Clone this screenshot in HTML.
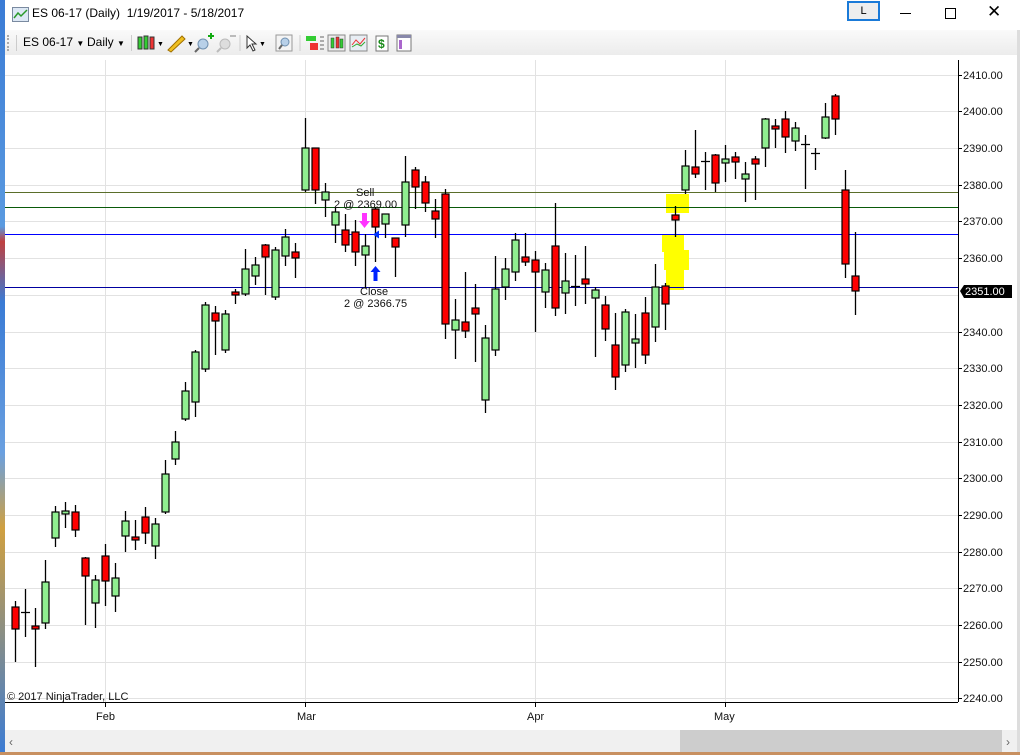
<!DOCTYPE html>
<html><head><meta charset="utf-8"><style>
body{margin:0;width:1020px;height:755px;overflow:hidden;background:#fff;font-family:"Liberation Sans",sans-serif;position:relative}
.abs{position:absolute}
</style></head><body>
<div class="abs" style="left:0;top:0;width:5px;height:755px;background:linear-gradient(#3a7bd5,#5a9ae0 30%,#c04040 32%,#3a7bd5 40%,#6aa0e0 60%,#d0a040 70%,#3a7bd5)"></div>
<div class="abs" style="left:5px;top:0;width:1015px;height:30px;background:#fff"></div>
<svg class="abs" style="left:12px;top:7px" width="17" height="15"><rect x="0.5" y="0.5" width="16" height="14" fill="#dde8f5" stroke="#7a8aa0"/><polyline points="2,11 6,6 9,9 15,3" fill="none" stroke="#2a9a2a" stroke-width="1.5"/></svg>
<div class="abs" style="left:32px;top:6px;font-size:12px;color:#000">ES 06-17 (Daily)&nbsp; 1/19/2017 - 5/18/2017</div>
<div class="abs" style="left:847px;top:1px;width:29px;height:16px;border:2px solid #1a7ad8;background:#eee;font-size:11px;text-align:center;line-height:16px">L</div>
<div class="abs" style="left:900px;top:13px;width:11px;height:1px;background:#000"></div>
<div class="abs" style="left:945px;top:8px;width:9px;height:9px;border:1px solid #000"></div>
<div class="abs" style="left:987px;top:2px;font-size:17px">✕</div>
<div class="abs" style="left:5px;top:30px;width:1012px;height:25px;background:linear-gradient(#fafafa,#ececec)"></div>
<div class="abs" style="left:7px;top:35px;width:2px;height:16px;border-left:2px dotted #aaa"></div>
<div class="abs" style="left:16px;top:35px;width:1px;height:16px;background:#ccc"></div>
<div class="abs" style="left:23px;top:35px;font-size:12px">ES 06-17 <span style="font-size:8px">▼</span></div>
<div class="abs" style="left:87px;top:35px;font-size:12px">Daily <span style="font-size:8px">▼</span></div>
<div class="abs" style="left:131px;top:35px;width:1px;height:16px;background:#ccc"></div>
<svg class="abs" style="left:136px;top:33px" width="340" height="20">
<g stroke="#333" stroke-width="1"><rect x="2" y="4" width="4" height="12" fill="#3c3"/><rect x="8" y="3" width="4" height="13" fill="#3c3"/><rect x="14" y="4" width="4" height="12" fill="#e33"/></g>
<text x="21" y="13" font-size="7">▼</text>
<path d="M32 17 L46 3 L49 6 L35 19 Z" fill="#f0c020" stroke="#a07000"/><text x="51" y="13" font-size="7">▼</text>
<circle cx="67" cy="11" r="5" fill="#b8d0e8" stroke="#7090b0"/><line x1="63" y1="15" x2="59" y2="19" stroke="#666" stroke-width="2"/><path d="M72 3h6M75 0v6" stroke="#1a1" stroke-width="2"/>
<circle cx="89" cy="11" r="5" fill="#ddd" stroke="#bbb"/><line x1="85" y1="15" x2="81" y2="19" stroke="#bbb" stroke-width="2"/><path d="M94 3h6" stroke="#bbb" stroke-width="2"/>
<line x1="104" y1="2" x2="104" y2="18" stroke="#ccc"/>
<path d="M111 3 L111 15 L114 12 L117 18 L119 17 L116 11 L120 11 Z" fill="#fff" stroke="#333"/><text x="123" y="13" font-size="7">▼</text>
<rect x="140" y="2" width="16" height="16" fill="#f4f4f4" stroke="#999"/><circle cx="149" cy="9" r="4" fill="#b8d0e8" stroke="#7090b0"/><line x1="146" y1="12" x2="143" y2="16" stroke="#666" stroke-width="2"/>
<line x1="164" y1="2" x2="164" y2="18" stroke="#ccc"/>
<rect x="170" y="3" width="10" height="5" fill="#3c3"/><rect x="174" y="10" width="8" height="7" fill="#e33"/><path d="M184 4h4M184 8h4M184 12h4M184 16h4" stroke="#666"/>
<rect x="192" y="2" width="17" height="16" fill="#eee" stroke="#888"/><rect x="195" y="5" width="3" height="10" fill="#3c3" stroke="#333" stroke-width=".5"/><rect x="200" y="4" width="3" height="11" fill="#e33" stroke="#333" stroke-width=".5"/><rect x="204" y="6" width="3" height="9" fill="#3c3" stroke="#333" stroke-width=".5"/>
<rect x="214" y="2" width="17" height="16" fill="#e8eef4" stroke="#888"/><polyline points="216,12 220,7 224,11 229,5" fill="none" stroke="#e33"/><polyline points="216,14 221,11 225,13 229,9" fill="none" stroke="#3a3"/>
<rect x="240" y="3" width="12" height="15" fill="#fff" stroke="#777"/><text x="242" y="15" font-size="12" font-weight="bold" fill="#1a8a1a">$</text>
<rect x="261" y="2" width="14" height="16" fill="#fff" stroke="#777"/><rect x="261" y="2" width="14" height="3" fill="#88a"/><rect x="263" y="7" width="3" height="9" fill="#a6c"/>
</svg>
<svg class="abs" style="left:0;top:0" width="1020" height="755">
<g stroke="#e2e2e2" stroke-width="1">
<line x1="105.5" y1="60" x2="105.5" y2="702"/><line x1="305.5" y1="60" x2="305.5" y2="702"/><line x1="535.5" y1="60" x2="535.5" y2="702"/><line x1="725.5" y1="60" x2="725.5" y2="702"/>
<line x1="5" y1="75.5" x2="958" y2="75.5"/><line x1="5" y1="111.5" x2="958" y2="111.5"/><line x1="5" y1="148.5" x2="958" y2="148.5"/><line x1="5" y1="185.5" x2="958" y2="185.5"/><line x1="5" y1="221.5" x2="958" y2="221.5"/><line x1="5" y1="258.5" x2="958" y2="258.5"/><line x1="5" y1="295.5" x2="958" y2="295.5"/><line x1="5" y1="332.5" x2="958" y2="332.5"/><line x1="5" y1="368.5" x2="958" y2="368.5"/><line x1="5" y1="405.5" x2="958" y2="405.5"/><line x1="5" y1="442.5" x2="958" y2="442.5"/><line x1="5" y1="478.5" x2="958" y2="478.5"/><line x1="5" y1="515.5" x2="958" y2="515.5"/><line x1="5" y1="552.5" x2="958" y2="552.5"/><line x1="5" y1="588.5" x2="958" y2="588.5"/><line x1="5" y1="625.5" x2="958" y2="625.5"/><line x1="5" y1="662.5" x2="958" y2="662.5"/><line x1="5" y1="698.5" x2="958" y2="698.5"/>
</g>
<g fill="#ffff00"><rect x="666" y="194" width="23" height="19"/><rect x="662" y="235" width="22" height="17"/><rect x="664" y="250" width="25" height="20"/><rect x="666" y="268" width="18" height="22"/></g>
<line x1="5" y1="192.5" x2="958" y2="192.5" stroke="#5a6e2a"/>
<line x1="5" y1="207.5" x2="958" y2="207.5" stroke="#0a5a0a"/>
<line x1="5" y1="234.5" x2="958" y2="234.5" stroke="#0000ff"/>
<line x1="5" y1="287.5" x2="958" y2="287.5" stroke="#0000a0"/>
<g stroke="#000" stroke-width="1.3">
<path d="M15.5 601V662M25.5 589V637M35.5 608V667M45.5 560V629M55.5 506V547M65.5 502V528M75.5 505V537M85.5 557V625M95.5 575V628M105.5 544V606M115.5 563V612M125.5 511V552M135.5 520V550M145.5 507V544M155.5 518V559M165.5 460V514M175.5 431V465M185.5 382V421M195.5 350V417M205.5 302V372M215.5 306V355M225.5 310V353M235.5 289V304M245.5 249V296M255.5 257V285M265.5 244V295M275.5 247V300M285.5 229V266M295.5 243V278M305.5 118V192M315.5 148V204M325.5 183V217M335.5 207V243M345.5 214V252M355.5 220V266M365.5 234V288M375.5 207V262M385.5 214V238M395.5 238V277M405.5 156V237M415.5 167V209M425.5 176V212M435.5 199V238M445.5 189V339M455.5 299V359M465.5 272V338M475.5 284V362M485.5 325V413M495.5 256V356M505.5 258V300M515.5 233V281M525.5 233V266M535.5 251V332M545.5 263V308M555.5 203V316M565.5 253V314M575.5 255V306M585.5 246V304M595.5 287V357M605.5 296V341M615.5 313V390M625.5 309V372M635.5 314V368M645.5 297V364M655.5 264V342M665.5 283V330M675.5 206V237M685.5 150V194M695.5 130V178M705.5 152V190M715.5 154V192M725.5 145V182M735.5 152V179M745.5 162V202M755.5 156V200M765.5 118V167M775.5 119V148M785.5 111V153M795.5 122V151M805.5 135V189M815.5 148V170M825.5 103V139M835.5 94V135M845.5 170V278M855.5 232V315"/>
<path d="M21 612.5h9M571 286.5h9M701 161.5h9M801 144.5h9M811 153.5h9"/>
</g>
<g stroke="#000" stroke-width="1.2">
<g fill="#ff0000"><rect x="12" y="607" width="7" height="22"/><rect x="32" y="626" width="7" height="3"/><rect x="72" y="512" width="7" height="18"/><rect x="82" y="558" width="7" height="18"/><rect x="102" y="556" width="7" height="25"/><rect x="132" y="537" width="7" height="3"/><rect x="142" y="517" width="7" height="16"/><rect x="212" y="313" width="7" height="8"/><rect x="232" y="292" width="7" height="3"/><rect x="262" y="245" width="7" height="12"/><rect x="292" y="252" width="7" height="6"/><rect x="312" y="148" width="7" height="42"/><rect x="342" y="230" width="7" height="15"/><rect x="352" y="232" width="7" height="20"/><rect x="372" y="209" width="7" height="18"/><rect x="392" y="238" width="7" height="9"/><rect x="412" y="170" width="7" height="17"/><rect x="422" y="182" width="7" height="21"/><rect x="432" y="211" width="7" height="8"/><rect x="442" y="194" width="7" height="130"/><rect x="462" y="322" width="7" height="9"/><rect x="472" y="308" width="7" height="6"/><rect x="522" y="257" width="7" height="5"/><rect x="532" y="260" width="7" height="12"/><rect x="552" y="246" width="7" height="62"/><rect x="582" y="279" width="7" height="5"/><rect x="602" y="305" width="7" height="24"/><rect x="612" y="345" width="7" height="32"/><rect x="642" y="313" width="7" height="42"/><rect x="662" y="286" width="7" height="18"/><rect x="672" y="215" width="7" height="5"/><rect x="692" y="167" width="7" height="7"/><rect x="712" y="155" width="7" height="28"/><rect x="732" y="157" width="7" height="5"/><rect x="752" y="159" width="7" height="5"/><rect x="772" y="126" width="7" height="3"/><rect x="782" y="119" width="7" height="18"/><rect x="832" y="96" width="7" height="23"/><rect x="842" y="190" width="7" height="74"/><rect x="852" y="276" width="7" height="15"/></g>
<g fill="#90ee90"><rect x="42" y="582" width="7" height="41"/><rect x="52" y="512" width="7" height="26"/><rect x="62" y="511" width="7" height="3"/><rect x="92" y="580" width="7" height="23"/><rect x="112" y="578" width="7" height="18"/><rect x="122" y="521" width="7" height="15"/><rect x="152" y="524" width="7" height="22"/><rect x="162" y="474" width="7" height="38"/><rect x="172" y="442" width="7" height="17"/><rect x="182" y="391" width="7" height="28"/><rect x="192" y="352" width="7" height="50"/><rect x="202" y="305" width="7" height="64"/><rect x="222" y="314" width="7" height="36"/><rect x="242" y="269" width="7" height="25"/><rect x="252" y="265" width="7" height="11"/><rect x="272" y="250" width="7" height="47"/><rect x="282" y="237" width="7" height="19"/><rect x="302" y="148" width="7" height="42"/><rect x="322" y="192" width="7" height="8"/><rect x="332" y="212" width="7" height="13"/><rect x="362" y="246" width="7" height="9"/><rect x="382" y="214" width="7" height="10"/><rect x="402" y="182" width="7" height="43"/><rect x="452" y="320" width="7" height="10"/><rect x="482" y="338" width="7" height="62"/><rect x="492" y="289" width="7" height="61"/><rect x="502" y="269" width="7" height="18"/><rect x="512" y="240" width="7" height="32"/><rect x="542" y="270" width="7" height="22"/><rect x="562" y="281" width="7" height="12"/><rect x="592" y="290" width="7" height="8"/><rect x="622" y="312" width="7" height="53"/><rect x="632" y="339" width="7" height="4"/><rect x="652" y="287" width="7" height="40"/><rect x="682" y="166" width="7" height="24"/><rect x="722" y="159" width="7" height="4"/><rect x="742" y="174" width="7" height="5"/><rect x="762" y="119" width="7" height="29"/><rect x="792" y="128" width="7" height="13"/><rect x="822" y="117" width="7" height="21"/></g>
</g>
<path d="M362 213h5v8h3l-5.5 7l-5.5-7h3z" fill="#ff33ff"/>
<path d="M373 234.5l6-4v8z" fill="#0033ff"/>
<path d="M375.5 266l5 6h-3v9h-4v-9h-3z" fill="#0022ff"/>
<g font-size="11" fill="#111">
<text x="356" y="196">Sell</text><text x="334" y="208">2 @ 2369.00</text>
<text x="360" y="295">Close</text><text x="344" y="307">2 @ 2366.75</text>
<text x="7" y="700">© 2017 NinjaTrader, LLC</text>
</g>
<line x1="5" y1="702.5" x2="958" y2="702.5" stroke="#000"/>
<line x1="958.5" y1="60" x2="958.5" y2="702" stroke="#000"/>
<g stroke="#000"><path d="M105.5 702v5M305.5 702v5M535.5 702v5M725.5 702v5"/>
<path d="M958 75.5h4M958 111.5h4M958 148.5h4M958 185.5h4M958 221.5h4M958 258.5h4M958 332.5h4M958 368.5h4M958 405.5h4M958 442.5h4M958 478.5h4M958 515.5h4M958 552.5h4M958 588.5h4M958 625.5h4M958 662.5h4M958 698.5h4"/></g>
<g font-size="11" fill="#111">
<text x="963" y="79">2410.00</text><text x="963" y="115">2400.00</text><text x="963" y="152">2390.00</text><text x="963" y="189">2380.00</text><text x="963" y="225">2370.00</text><text x="963" y="262">2360.00</text><text x="963" y="336">2340.00</text><text x="963" y="372">2330.00</text><text x="963" y="409">2320.00</text><text x="963" y="446">2310.00</text><text x="963" y="482">2300.00</text><text x="963" y="519">2290.00</text><text x="963" y="556">2280.00</text><text x="963" y="592">2270.00</text><text x="963" y="629">2260.00</text><text x="963" y="666">2250.00</text><text x="963" y="702">2240.00</text>
<text x="96" y="720">Feb</text><text x="297" y="720">Mar</text><text x="527" y="720">Apr</text><text x="714" y="720">May</text>
</g>
<path d="M960 291l4-6h48v13h-48z" fill="#000"/>
<text x="965" y="295" font-size="11" fill="#fff">2351.00</text>
<rect x="5" y="730" width="1012" height="22" fill="#f0f0f0"/>
<rect x="680" y="730" width="322" height="22" fill="#cdcdcd"/>
<text x="9" y="746" font-size="12" fill="#666">‹</text><text x="1006" y="746" font-size="12" fill="#666">›</text>
<rect x="0" y="752" width="1020" height="3" fill="#c89060"/>
<rect x="1017" y="30" width="3" height="722" fill="#ddd"/>
</svg>
</body></html>
